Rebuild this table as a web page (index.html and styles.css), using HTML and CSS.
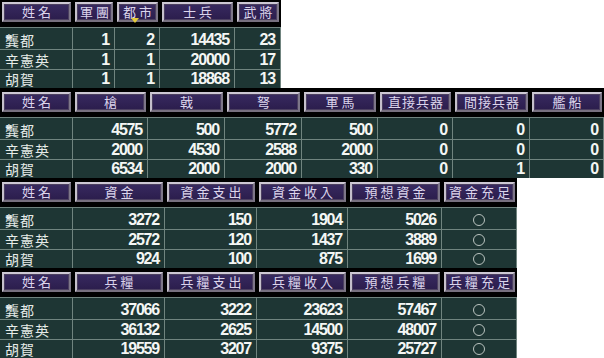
FILE: index.html
```html
<!DOCTYPE html>
<html lang="zh-Hant">
<head>
<meta charset="utf-8">
<title>勢力</title>
<link rel="stylesheet" href="styles.css">
</head>
<body>
<div class="tbl t1 first">
  <div class="hd"><span class="btn">姓名</span></div>
  <div class="hd"><span class="btn">軍團</span></div>
  <div class="hd sorted"><span class="btn">都市</span><i class="tri"></i></div>
  <div class="hd"><span class="btn">士兵</span></div>
  <div class="hd"><span class="btn">武將</span></div>

  <div class="c nm r1">龔都</div><div class="c r1">1</div><div class="c r1">2</div><div class="c r1">14435</div><div class="c r1">23</div>
  <div class="c nm">辛憲英</div><div class="c">1</div><div class="c">1</div><div class="c">20000</div><div class="c">17</div>
  <div class="c nm r3">胡賀</div><div class="c r3">1</div><div class="c r3">1</div><div class="c r3">18868</div><div class="c r3">13</div>
</div>

<div class="tbl t2">
  <div class="hd"><span class="btn">姓名</span></div>
  <div class="hd"><span class="btn">槍</span></div>
  <div class="hd"><span class="btn">戟</span></div>
  <div class="hd"><span class="btn">弩</span></div>
  <div class="hd"><span class="btn">軍馬</span></div>
  <div class="hd"><span class="btn tight">直接兵器</span></div>
  <div class="hd"><span class="btn tight">間接兵器</span></div>
  <div class="hd"><span class="btn">艦船</span></div>

  <div class="c nm r1">龔都</div><div class="c r1">4575</div><div class="c r1">500</div><div class="c r1">5772</div><div class="c r1">500</div><div class="c r1">0</div><div class="c r1">0</div><div class="c r1">0</div>
  <div class="c nm">辛憲英</div><div class="c">2000</div><div class="c">4530</div><div class="c">2588</div><div class="c">2000</div><div class="c">0</div><div class="c">0</div><div class="c">0</div>
  <div class="c nm r3">胡賀</div><div class="c r3">6534</div><div class="c r3">2000</div><div class="c r3">2000</div><div class="c r3">330</div><div class="c r3">0</div><div class="c r3">1</div><div class="c r3">0</div>
</div>

<div class="tbl t3">
  <div class="hd"><span class="btn">姓名</span></div>
  <div class="hd"><span class="btn">資金</span></div>
  <div class="hd"><span class="btn">資金支出</span></div>
  <div class="hd"><span class="btn">資金收入</span></div>
  <div class="hd"><span class="btn">預想資金</span></div>
  <div class="hd"><span class="btn">資金充足</span></div>

  <div class="c nm r1">龔都</div><div class="c r1">3272</div><div class="c r1">150</div><div class="c r1">1904</div><div class="c r1">5026</div><div class="c ok r1"><i class="ring"></i></div>
  <div class="c nm">辛憲英</div><div class="c">2572</div><div class="c">120</div><div class="c">1437</div><div class="c">3889</div><div class="c ok"><i class="ring"></i></div>
  <div class="c nm r3">胡賀</div><div class="c r3">924</div><div class="c r3">100</div><div class="c r3">875</div><div class="c r3">1699</div><div class="c ok r3"><i class="ring"></i></div>
</div>

<div class="tbl t3">
  <div class="hd"><span class="btn">姓名</span></div>
  <div class="hd"><span class="btn">兵糧</span></div>
  <div class="hd"><span class="btn">兵糧支出</span></div>
  <div class="hd"><span class="btn">兵糧收入</span></div>
  <div class="hd"><span class="btn">預想兵糧</span></div>
  <div class="hd"><span class="btn">兵糧充足</span></div>

  <div class="c nm r1">龔都</div><div class="c r1">37066</div><div class="c r1">3222</div><div class="c r1">23623</div><div class="c r1">57467</div><div class="c ok r1"><i class="ring"></i></div>
  <div class="c nm">辛憲英</div><div class="c">36132</div><div class="c">2625</div><div class="c">14500</div><div class="c">48007</div><div class="c ok"><i class="ring"></i></div>
  <div class="c nm r3">胡賀</div><div class="c r3">19559</div><div class="c r3">3207</div><div class="c r3">9375</div><div class="c r3">25727</div><div class="c ok r3"><i class="ring"></i></div>
</div>
</body>
</html>
```

FILE: styles.css
```css
html, body {
  margin: 0;
  padding: 0;
  background: #ffffff;
  overflow: hidden;
}

body {
  width: 604px;
  height: 358px;
}

.tbl {
  display: grid;
  grid-template-rows: 29px 23px 20px 18px;
  width: max-content;
  background: #000;
}

.first { margin-top: -2px; }

.t1 { grid-template-columns: 73px 42px 45px 75px 46px; }
.t2 { grid-template-columns: 73px 75px 77px 77px 76px 75px 77px 74px; }
.t3 { grid-template-columns: 73px 92px 92px 91px 94px 75px; }

.hd {
  position: relative;
  padding: 4px 2px 5px 2px;
  box-sizing: border-box;
  display: flex;
}

.btn {
  flex: 1;
  box-sizing: border-box;
  height: 20px;
  border: 2px solid;
  border-color: #cdc8d4 #7d7688 #77707f #c5c0cb;
  box-shadow: inset 0 0 0 1px #4b3f60;
  background: linear-gradient(#382a60, #2b1d4c);
  color: #dcd5ec;
  font-family: "Noto Sans CJK TC", "Noto Sans CJK JP", sans-serif;
  font-size: 13px;
  line-height: 16px;
  letter-spacing: 3px;
  text-indent: 3px;
  text-align: center;
  white-space: nowrap;
  overflow: hidden;
}

.btn.tight {
  letter-spacing: 1px;
  text-indent: 1px;
}

.tri {
  position: absolute;
  left: 16px;
  top: 20px;
  width: 0;
  height: 0;
  border-left: 4px solid transparent;
  border-right: 4px solid transparent;
  border-top: 5px solid #e5cc3a;
}

.c {
  box-sizing: border-box;
  background: #1e3634;
  border-right: 1px solid #70847f;
  border-bottom: 1px solid #70847f;
  display: flex;
  align-items: center;
  justify-content: flex-end;
  padding-right: 5px;
  color: #f4f6f4;
  font-family: "Liberation Sans", Arial, sans-serif;
  font-weight: bold;
  font-size: 16px;
  letter-spacing: -1.2px;
  line-height: 1;
}

.c.r1 {
  border-top: 1px solid #70847f;
  padding-top: 2px;
}

.c.r3 {
  border-bottom: none;
}

.c.nm {
  justify-content: flex-start;
  padding-left: 5px;
  padding-right: 0;
  font-family: "Noto Sans CJK TC", "Noto Sans CJK JP", sans-serif;
  font-weight: normal;
  font-size: 14px;
  letter-spacing: 1px;
  color: #e6ebe8;
}

.c.ok {
  justify-content: center;
  padding-right: 0;
}

.ring {
  display: block;
  width: 12px;
  height: 12px;
  box-sizing: border-box;
  border: 1px solid #b9c3bf;
  border-radius: 50%;
}
```
